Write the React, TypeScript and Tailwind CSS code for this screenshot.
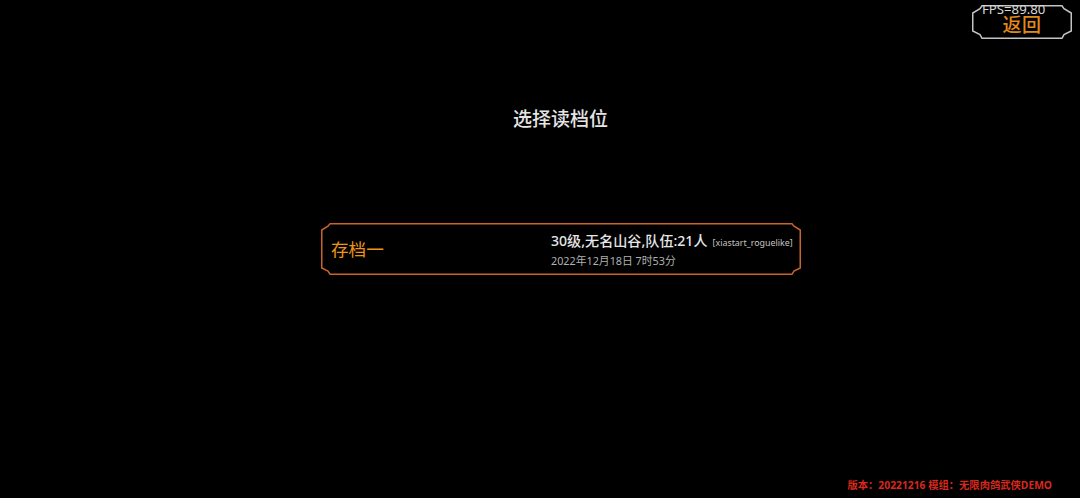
const sans = "font-['Noto_Sans','Noto_Sans_CJK_SC',sans-serif]"

function Frame({ w, h, c, color, width }: { w: number; h: number; c: number; color: string; width: number }) {
  const a = 0.75
  const pts = [
    [c + 2, a], [w - c - 2, a], [w - c, c * 0.45], [w - a, c], [w - a, h - c], [w - c, h - c * 0.55], [w - c - 2, h - a],
    [c + 2, h - a], [c, h - c * 0.55], [a, h - c], [a, c], [c, c * 0.45],
  ]
  return (
    <svg className="absolute inset-0" width={w} height={h} viewBox={`0 0 ${w} ${h}`} fill="none">
      <polygon points={pts.map((p) => p.join(",")).join(" ")} stroke={color} strokeWidth={width} />
    </svg>
  )
}

function BackButton() {
  return (
    <div className="relative w-[100px] h-[34px] flex items-center justify-center">
      <Frame w={100} h={34} c={8} color="#c4c4c4" width={1.5} />
      <span className="relative text-[19px] leading-none font-medium text-[#e08a1c] tracking-[0.5px] mt-[6px]">返回</span>
      <span className="absolute left-[10px] top-[-3px] text-[13.2px] leading-[14px] text-[#d8d8d8] whitespace-nowrap">FPS=89.80</span>
    </div>
  )
}

function SaveSlot() {
  return (
    <div className="relative w-[480px] h-[52px] flex items-center pl-[10px]">
      <Frame w={480} h={52} c={7} color="#c8642a" width={1.5} />
      <div className="relative w-[220px] mt-[1px] text-[17.6px] leading-none text-[#ee9416]">存档一</div>
      <div className="relative flex flex-col gap-[2px] mt-[1px]">
        <div className="flex items-baseline whitespace-nowrap">
          <span className="text-[14.1px] leading-[18px] font-medium text-[#e6e6e6]">30级,无名山谷,队伍:21人</span>
          <span className="ml-[5px] text-[8.9px] leading-[18px] text-[#c4c4c4]">[xiastart_roguelike]</span>
        </div>
        <div className="text-[10.8px] leading-[14px] text-[#b0b0b0] whitespace-nowrap">2022年12月18日 7时53分</div>
      </div>
    </div>
  )
}

export default function App() {
  return (
    <div className={`w-[1080px] h-[498px] bg-black overflow-hidden flex flex-col ${sans}`}>
      <div className="flex justify-end pt-[5px] pr-[8px]">
        <BackButton />
      </div>
      <h1 className="mt-[67px] pl-[41px] text-center text-[19px] leading-[26px] font-medium text-[#e4e4e4]">选择读档位</h1>
      <div className="mt-[91px] pl-[42px] flex justify-center">
        <SaveSlot />
      </div>
      <div className="mt-auto pb-[6px] pr-[28px] text-right text-[10.3px] leading-[13px] font-bold text-[#d8281c]">
        版本：20221216 模组：无限肉鸽武侠DEMO
      </div>
    </div>
  )
}
